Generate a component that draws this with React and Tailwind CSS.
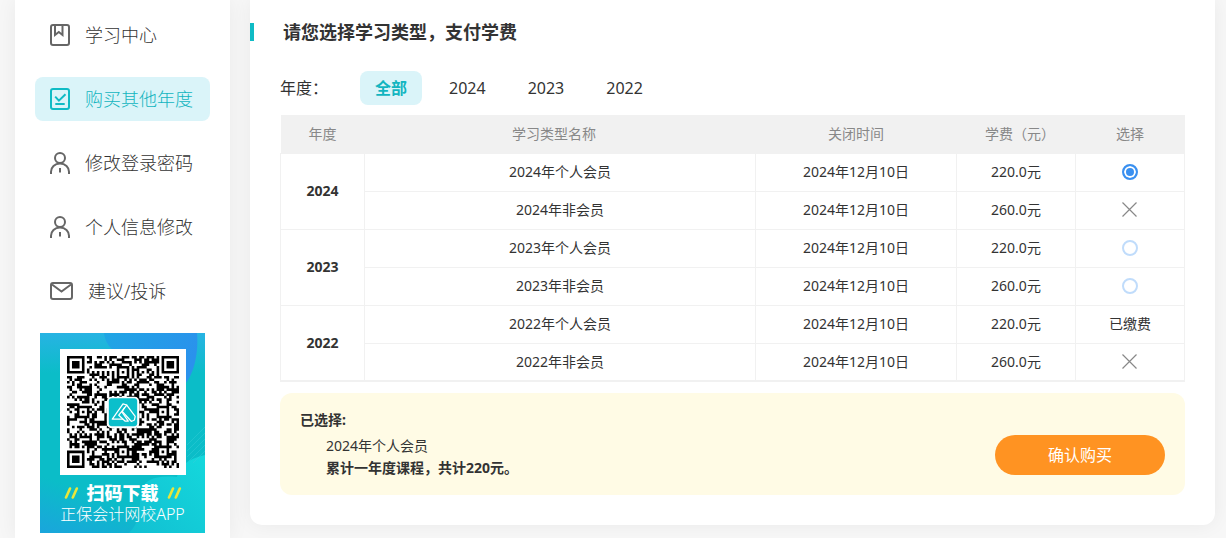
import { useState } from 'react';
import clsx from 'clsx';

const BookIcon = () => (
  <svg className="w-5 h-[22px]" viewBox="0 0 20 22" fill="none" stroke="currentColor" strokeWidth="2">
    <rect x="1" y="1" width="18" height="20" rx="2" />
    <path d="M5 1v10l3.8-3L12.5 11V1" />
  </svg>
);

const CheckIcon = () => (
  <svg className="w-5 h-[22px]" viewBox="0 0 20 22" fill="none" stroke="currentColor" strokeWidth="2">
    <rect x="1" y="1" width="18" height="20" rx="2" />
    <path d="M5.2 8.6l3.7 4 6.6-6.4M5.3 16h9.4" />
  </svg>
);

const UserIcon = () => (
  <svg className="w-5 h-[22px]" viewBox="0 0 20 22" fill="none" stroke="currentColor" strokeWidth="2">
    <circle cx="10" cy="6" r="5" />
    <path d="M1 22v-2.2c0-4.6 3.6-8.3 9-8.3s9 3.7 9 8.3V22M10 16v4.6" />
  </svg>
);

const MailIcon = () => (
  <svg className="w-[23px] h-[18px]" viewBox="0 0 23 18" fill="none" stroke="currentColor" strokeWidth="2">
    <rect x="1" y="1" width="21" height="16" rx="2" />
    <path d="M2 2.5l9.5 7L21 2.5" />
  </svg>
);

const CrossIcon = () => (
  <svg className="w-4 h-4 mx-auto" viewBox="0 0 16 16" fill="none" stroke="#888" strokeWidth="1.2" role="img" aria-label="不可选">
    <path d="M0.5 0.5l14 14M14.5 0.5l-14 14" />
  </svg>
);

const QR_SIZE = 45;

const buildQrPath = () => {
  let seed = 20241;
  let path = '';
  const finders = [[3, 3], [41, 3], [3, 41]];
  const aligns = [[22, 6], [6, 22], [22, 22], [38, 22], [22, 38], [38, 38]];
  for (let y = 0; y < QR_SIZE; y++) {
    for (let x = 0; x < QR_SIZE; x++) {
      seed = (seed * 1103515245 + 12345) % 2147483648;
      let dark = seed / 2147483648 < 0.52;
      if (x === 6 || y === 6) dark = (x + y) % 2 === 0;
      aligns.forEach(([cx, cy]) => {
        const d = Math.max(Math.abs(x - cx), Math.abs(y - cy));
        if (d <= 2) dark = d !== 1;
      });
      finders.forEach(([cx, cy]) => {
        const d = Math.max(Math.abs(x - cx), Math.abs(y - cy));
        if (d <= 4) dark = d !== 2 && d !== 4;
      });
      if (dark) path += `M${x} ${y}h1.04v1.04h-1.04z`;
    }
  }
  return path;
};

const qrPath = buildQrPath();

const QrCode = () => (
  <svg className="w-28 h-28" viewBox="0 0 45 45" role="img" aria-label="APP 下载二维码">
    <path d={qrPath} fill="#000" />
    <rect x="16" y="16.4" width="13" height="12.6" rx="1.8" fill="#fff" />
    <rect x="16.8" y="17" width="11.4" height="11.2" rx="1.2" fill="#0bbfcb" />
    <g fill="none" stroke="#fff" strokeWidth="0.5" strokeLinejoin="round" strokeLinecap="round">
      <path d="M22.4 25.4h-4.2l4.3-6.2 1.5.5 3.4 4.6-.3 1.4-1.2.6-3.7-4 .9-1.5" />
      <path d="M24 19.7l-3.2 4.1 2.6 2.4h1.2l-2.4-3.5" />
    </g>
  </svg>
);

const Slashes = () => (
  <svg className="w-[15px] h-3" viewBox="0 0 15 12" fill="none" stroke="#e9e63a" strokeWidth="2.6" strokeLinecap="round">
    <path d="M2 10.5L6 1.5M8.8 10.5l4-9" />
  </svg>
);

const AppBanner = () => (
  <div className="relative mx-auto mt-5 h-[200px] w-[165px] overflow-hidden bg-[#0bbdc8] pt-4 text-white">
    <svg className="absolute inset-0 h-full w-full" viewBox="0 0 165 200" preserveAspectRatio="none" aria-hidden="true">
      <defs>
        <linearGradient id="blob" x1="0" y1="0" x2="1" y2="0.3">
          <stop offset="0" stopColor="#1fa6e4" />
          <stop offset="1" stopColor="#2a92ec" />
        </linearGradient>
        <linearGradient id="sky" x1="0" y1="0" x2="0" y2="1">
          <stop offset="0" stopColor="#27b3e3" />
          <stop offset="1" stopColor="#0bbdc8" />
        </linearGradient>
        <linearGradient id="wave" x1="1" y1="0" x2="0" y2="1">
          <stop offset="0" stopColor="#14d8dc" />
          <stop offset="1" stopColor="#12bfd2" />
        </linearGradient>
        <linearGradient id="foot" x1="0" y1="1" x2="1" y2="0">
          <stop offset="0" stopColor="#1aa5dc" />
          <stop offset="0.5" stopColor="#0bbdc8" />
        </linearGradient>
      </defs>
      <rect width="165" height="40" fill="url(#sky)" />
      <path d="M64 0c2 18 20 28 45 26 22-2 30 4 36 25 8-8 14-30 12-51z" fill="url(#blob)" />
      <rect y="142" width="165" height="58" fill="url(#foot)" />
      <path d="M165 122c-18 4-26 12-28 22-20-2-34 2-36 16-2 16 0 28-12 40h76z" fill="url(#wave)" />
      <g stroke="#3bd0da" strokeWidth="0.6" opacity="0.7">
        <path d="M147 112l18-18M147 118l18-18M147 124l18-18M149 128l16-16M153 130l12-12" />
      </g>
    </svg>
    <div className="relative flex flex-col items-center">
      <div className="bg-white p-[7px]">
        <QrCode />
      </div>
      <div className="mt-2 flex items-center gap-2 text-lg leading-5 font-black">
        <Slashes />
        扫码下载
        <Slashes />
      </div>
      <div className="mt-px text-base leading-5 font-light">正保会计网校APP</div>
    </div>
  </div>
);

const menu = [
  { label: '学习中心', Icon: BookIcon },
  { label: '购买其他年度', Icon: CheckIcon, active: true },
  { label: '修改登录密码', Icon: UserIcon },
  { label: '个人信息修改', Icon: UserIcon },
  { label: '建议/投诉', Icon: MailIcon },
];

const Sidebar = () => (
  <aside className="w-[215px] shrink-0 bg-white pt-[13px] pb-[5px] shadow-[0_0_20px_rgba(0,0,0,0.06)]">
    <nav className="flex flex-col gap-5 px-5">
      {menu.map(({ label, Icon, active }) => (
        <a
          key={label}
          href="#"
          className={clsx(
            'flex h-11 items-center gap-[15px] rounded-lg pl-[15px] text-lg leading-6 font-light',
            active ? 'bg-[#daf4f9] text-[#12b5c0]' : 'text-[#333]'
          )}
        >
          <span className={active ? 'text-[#0fbbc5]' : 'text-[#666]'}>
            <Icon />
          </span>
          {label}
        </a>
      ))}
    </nav>
    <AppBanner />
  </aside>
);

const years = ['全部', '2024', '2023', '2022'];

const groups = [
  {
    year: '2024',
    rows: [
      { id: '2024-1', name: '2024年个人会员', end: '2024年12月10日', fee: '220.0元', status: 'open' },
      { id: '2024-2', name: '2024年非会员', end: '2024年12月10日', fee: '260.0元', status: 'closed' },
    ],
  },
  {
    year: '2023',
    rows: [
      { id: '2023-1', name: '2023年个人会员', end: '2024年12月10日', fee: '220.0元', status: 'open' },
      { id: '2023-2', name: '2023年非会员', end: '2024年12月10日', fee: '260.0元', status: 'open' },
    ],
  },
  {
    year: '2022',
    rows: [
      { id: '2022-1', name: '2022年个人会员', end: '2024年12月10日', fee: '220.0元', status: 'paid' },
      { id: '2022-2', name: '2022年非会员', end: '2024年12月10日', fee: '260.0元', status: 'closed' },
    ],
  },
];

const App = () => {
  const [year, setYear] = useState('全部');
  const [selected, setSelected] = useState('2024-1');

  const visible = groups.filter((g) => year === '全部' || g.year === year);
  const current = groups.flatMap((g) => g.rows).find((r) => r.id === selected);

  const renderChoice = (row) => {
    if (row.status === 'paid') return '已缴费';
    if (row.status === 'closed') return <CrossIcon />;
    return (
      <input
        type="radio"
        name="plan"
        aria-label={row.name}
        checked={selected === row.id}
        onChange={() => setSelected(row.id)}
        className="mx-auto block h-4 w-4 appearance-none rounded-full border-2 border-[#c0dcfb] bg-white checked:border-[#3a90f0] checked:bg-[#3a90f0] checked:shadow-[inset_0_0_0_2px_#fff]"
      />
    );
  };

  return (
    <div
      lang="zh-CN"
      className="flex min-h-screen items-stretch gap-5 bg-[#f7f7f7] pr-[11px] pl-[15px] font-['Noto_Sans','Noto_Sans_CJK_SC',sans-serif] text-sm text-[#333]"
    >
      <Sidebar />

      <main className="min-w-0 flex-1 self-start rounded-b-xl bg-white pt-[23px] pb-[30px] shadow-[0_0_20px_rgba(0,0,0,0.06)]">
        <h1 className="border-l-4 border-[#0fbbc5] pl-[29px] text-lg leading-[18px] font-bold">请您选择学习类型，支付学费</h1>

        <div className="px-[30px] pt-[30px]">
          <div className="flex items-center text-base">
            <span className="w-20">年度：</span>
            <div className="flex gap-3">
              {years.map((y) => (
                <button
                  key={y}
                  type="button"
                  onClick={() => setYear(y)}
                  className={clsx('h-[34px] rounded-lg px-[15px]', y === year && 'bg-[#daf4f9] font-bold text-[#12b5c0]')}
                >
                  {y}
                </button>
              ))}
            </div>
          </div>

          <table className="mt-[10px] w-full table-fixed border-collapse border-b-2 border-[#f1f1f1] text-center leading-5">
            <colgroup>
              <col className="w-[84px]" />
              <col />
              <col className="w-[201px]" />
              <col className="w-[119px]" />
              <col className="w-[109px]" />
            </colgroup>
            <thead>
              <tr className="h-[38px] bg-[#f1f1f1] text-[#888]">
                <th className="font-normal">年度</th>
                <th className="pr-3 font-normal">学习类型名称</th>
                <th className="font-normal">关闭时间</th>
                <th className="pl-2 font-normal">学费（元）</th>
                <th className="font-normal">选择</th>
              </tr>
            </thead>
            <tbody>
              {visible.map((g) =>
                g.rows.map((row, i) => (
                  <tr key={row.id} className="h-[38px]">
                    {i === 0 && (
                      <th rowSpan={g.rows.length} className="border border-[#f1f1f1] font-bold">
                        {g.year}
                      </th>
                    )}
                    <td className="border border-[#f1f1f1]">{row.name}</td>
                    <td className="border border-[#f1f1f1]">{row.end}</td>
                    <td className="border border-[#f1f1f1]">{row.fee}</td>
                    <td className="border border-[#f1f1f1]">{renderChoice(row)}</td>
                  </tr>
                ))
              )}
            </tbody>
          </table>

          <div className="mt-[11px] flex items-end justify-between rounded-xl bg-[#fffbe5] px-5 py-4">
            <div className="leading-[22px]">
              <div className="font-bold">已选择:</div>
              <div className="mt-1 pl-[26px]">
                <p>{current.name}</p>
                <p className="font-bold">累计一年度课程，共计{parseInt(current.fee, 10)}元。</p>
              </div>
            </div>
            <button type="button" className="mb-1 h-10 w-[170px] rounded-full bg-[#ff9322] text-base text-white">
              确认购买
            </button>
          </div>
        </div>
      </main>
    </div>
  );
};

export default App;
